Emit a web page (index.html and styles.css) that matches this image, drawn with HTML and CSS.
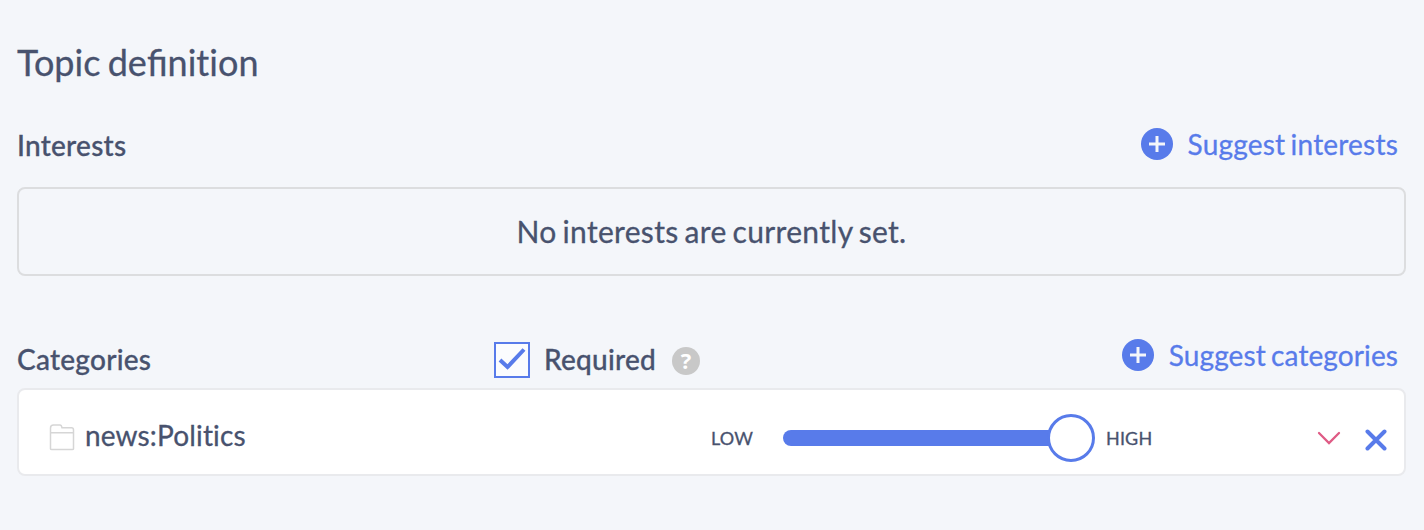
FILE: index.html
```html
<!DOCTYPE html>
<html lang="en">
<head>
<meta charset="utf-8">
<title>Topic definition</title>
<link rel="stylesheet" href="styles.css">
</head>
<body>
<main class="topic">
  <h1 class="title"><span class="text">Topic de<span class="ligature">fi</span>nition</span></h1>
  <section class="interests">
    <header class="bar">
      <h2 class="label"><span class="text">Interests</span></h2>
      <a class="suggest">
        <svg class="plus" viewBox="0 0 32 32"><circle cx="16" cy="16" r="16"/><path d="M8 16h16M16 8v16"/></svg>
        <span class="text">Suggest interests</span>
      </a>
    </header>
    <div class="empty"><span class="text">No interests are currently set.</span></div>
  </section>
  <section class="categories">
    <header class="bar">
      <h2 class="label"><span class="text">Categories</span></h2>
      <div class="required">
        <svg class="checkbox" viewBox="0 0 36 36"><rect x="1" y="1" width="34" height="34"/><path d="M6 18l7.500 7L30 7.500"/></svg>
        <span class="text required-text">Required</span>
        <span class="help">?</span>
      </div>
      <a class="suggest">
        <svg class="plus" viewBox="0 0 32 32"><circle cx="16" cy="16" r="16"/><path d="M8 16h16M16 8v16"/></svg>
        <span class="text">Suggest categories</span>
      </a>
    </header>
    <div class="row">
      <svg class="folder" viewBox="0 0 26 28"><path d="M1.500 9.500V5Q1.500 2 4.500 2H11Q12.500 2 13 4.800H22.500Q24.500 4.800 24.500 7V26Q24.500 26.500 23 26.500H3Q1.500 26.500 1.500 26V9.800H24.500"/></svg>
      <span class="text name">news:Politics</span>
      <span class="text low">LOW</span>
      <div class="slider"><div class="track"></div><div class="thumb"></div></div>
      <span class="text high">HIGH</span>
      <svg class="chevron" viewBox="0 0 24 14"><path d="M2 2L12 12L22 2"/></svg>
      <svg class="close" viewBox="0 0 22 22"><path d="M2.500 2.500l17 17M19.500 2.500L2.500 19.500"/></svg>
    </div>
  </section>
</main>
</body>
</html>
```
FILE: styles.css
```css
* { box-sizing: border-box; }
body {
  margin: 0;
  background: #f4f6fa;
  color: #48526e;
  font-family: Lato, "Liberation Sans", sans-serif;
}
svg { display: block; flex: none; fill: none; }
.text {
  display: block;
  white-space: nowrap;
  font-variant-ligatures: none;
  letter-spacing: 0.15px;
  word-spacing: -2px;
  -webkit-text-stroke: 0.3px currentColor;
}
.ligature { letter-spacing: 0; font-variant-ligatures: normal; }
.topic { width: 1424px; height: 530px; padding: 40px 18px 0 17px; }
.title { margin: 0; height: 45px; line-height: 44px; font-size: 36px; font-weight: 400; }
.title .text { letter-spacing: 0.03px; }
.bar { display: flex; align-items: flex-start; }
.interests .bar { height: 102px; padding-top: 43px; }
.label { margin: 0; width: 477px; font-size: 28px; line-height: 34px; font-weight: 500; }
.label .text, .required-text { letter-spacing: 0.25px; }
.suggest {
  display: flex;
  gap: 15px;
  margin-left: auto;
  padding-right: 8px;
  color: #587bea;
  font-size: 28px;
  line-height: 32px;
}
.interests .suggest .text { letter-spacing: 0.2px; }
.categories .suggest .text { letter-spacing: 0.1px; }
.plus { width: 32px; height: 32px; fill: #587bea; stroke: #f4f6fa; stroke-width: 3; }
.plus circle { stroke: none; }
.empty {
  display: flex;
  align-items: center;
  justify-content: center;
  height: 89px;
  padding-bottom: 1px;
  border: 2px solid #dcdddf;
  border-radius: 8px;
  font-size: 30px;
}
.empty .text { letter-spacing: 0.32px; }
.categories .bar { height: 112px; padding-top: 63px; }
.categories .label, .required { margin-top: 3px; }
.required { display: flex; align-items: center; height: 36px; }
.checkbox { width: 36px; height: 36px; fill: #fbfcfe; stroke: #587bea; stroke-width: 2; }
.checkbox path { fill: none; stroke-width: 4; }
.required-text { margin: 0 16px 2px 14px; font-size: 28px; font-weight: 500; }
.help {
  width: 28px;
  height: 28px;
  margin-top: 2px;
  border-radius: 50%;
  background: #c8c8c8;
  color: #fff;
  font-family: "Open Sans", sans-serif;
  font-size: 22px;
  font-weight: 700;
  line-height: 26px;
  text-align: center;
}
.row {
  display: flex;
  height: 88px;
  border: 2px solid #e9eaed;
  border-radius: 8px;
  background: #fff;
}
.row > * { flex: none; }
.folder { width: 26px; height: 28px; margin: 33px 10px 0 30px; stroke: #d6d6d6; stroke-width: 1.500; }
.name { width: 626px; padding-top: 28px; font-size: 28px; line-height: 34px; }
.low, .high { padding-top: 36px; font-size: 18px; line-height: 24px; }
.low { width: 72px; }
.slider { display: flex; align-items: center; width: 312px; height: 48px; margin-top: 24px; }
.track { width: 280px; height: 16px; border-radius: 8px; background: #587bea; }
.thumb { width: 48px; height: 48px; margin-left: -16px; border: 3px solid #587bea; border-radius: 50%; background: #fff; }
.high { width: 222px; padding-left: 11px; }
.chevron { width: 24px; height: 14px; margin-top: 41px; stroke: #df5b85; stroke-width: 2.300; stroke-linecap: round; }
.close { width: 22px; height: 22px; margin: 39px 0 0 24px; stroke: #587bea; stroke-width: 4; stroke-linecap: round; }
```
